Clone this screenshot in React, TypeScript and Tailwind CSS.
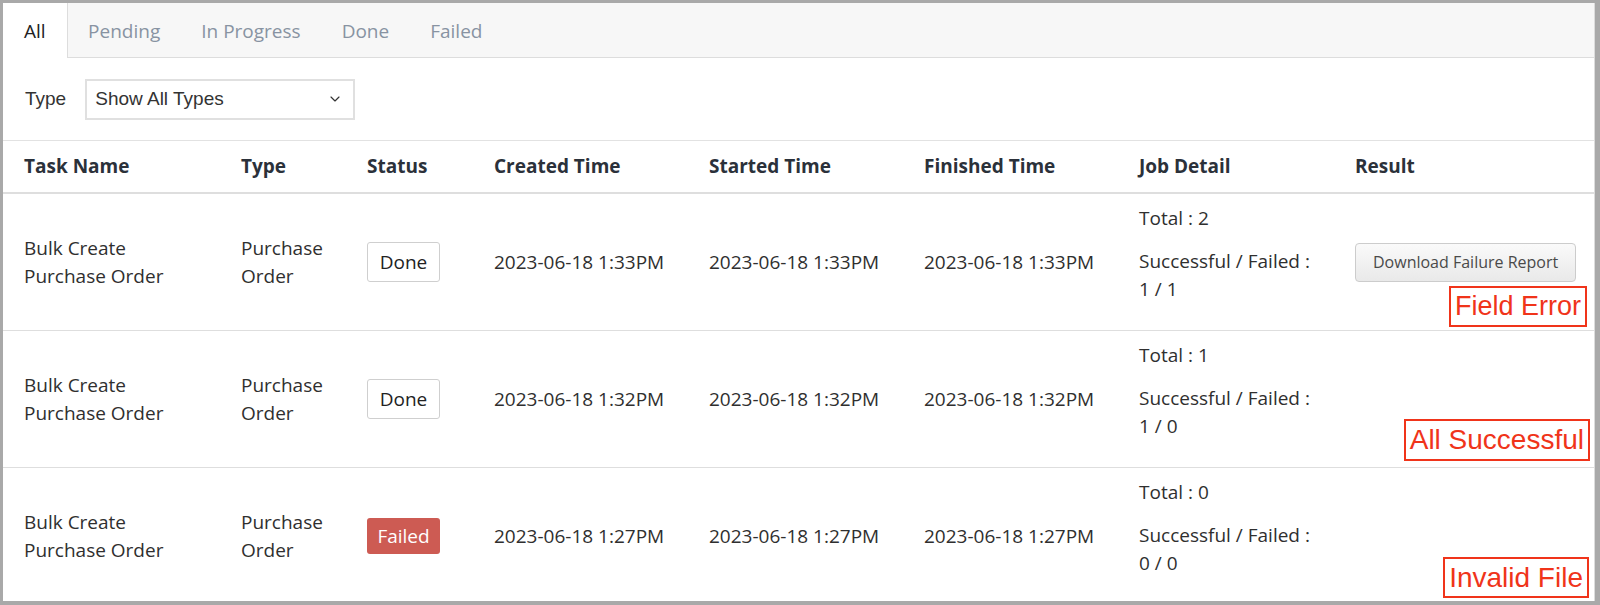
import { ChevronDown } from 'lucide-react';

const tabs = ['All', 'Pending', 'In Progress', 'Done', 'Failed'];

const columns = [
  'Task Name',
  'Type',
  'Status',
  'Created Time',
  'Started Time',
  'Finished Time',
  'Job Detail',
  'Result',
];

type Job = {
  time: string;
  status: 'Done' | 'Failed';
  total: number;
  ok: number;
  failed: number;
  report: boolean;
  note: string;
  noteClass: string;
};

const jobs: Job[] = [
  {
    time: '2023-06-18 1:33PM',
    status: 'Done',
    total: 2,
    ok: 1,
    failed: 1,
    report: true,
    note: 'Field Error',
    noteClass: 'right-[7px] bottom-[3px] leading-[37px] text-[27px]',
  },
  {
    time: '2023-06-18 1:32PM',
    status: 'Done',
    total: 1,
    ok: 1,
    failed: 0,
    report: false,
    note: 'All Successful',
    noteClass: 'right-[4px] bottom-[6px] leading-[38px] text-[28px]',
  },
  {
    time: '2023-06-18 1:27PM',
    status: 'Failed',
    total: 0,
    ok: 0,
    failed: 0,
    report: false,
    note: 'Invalid File',
    noteClass: 'right-[5px] bottom-[6px] leading-[37px] text-[28px]',
  },
];

const grid =
  'grid grid-cols-[217px_126px_127px_215px_215px_215px_216px_1fr]';

function StatusBadge({ status }: { status: Job['status'] }) {
  if (status === 'Failed') {
    return (
      <span className="inline-flex h-[36px] w-[73px] items-center justify-center rounded-[3px] bg-[#cd5b53] text-white">
        Failed
      </span>
    );
  }
  return (
    <span className="inline-flex h-[40px] w-[73px] items-center justify-center rounded-[3px] border border-[#cfcfcf] bg-white text-[#222]">
      Done
    </span>
  );
}

export default function App() {
  return (
    <div className="h-[605px] w-[1600px] overflow-hidden bg-[#a9a9a9] pb-[4px] pl-[3px] pr-[5px] pt-[3px]">
      <div className="flex h-full flex-col overflow-hidden border-r border-[#dcdcdc] bg-white font-['Open_Sans',sans-serif] text-[19px] leading-[28.5px] text-[#2f2f2f]">
        <div className="flex h-[55px] shrink-0 border-b border-[#dddddd] bg-[#f7f7f7]">
          {tabs.map((tab, i) => (
            <div
              key={tab}
              className={
                i === 0
                  ? '-mb-px flex h-[55px] items-center border-r border-[#dddddd] bg-white px-[21px] pt-[2px] text-[#222]'
                  : 'flex items-center px-[20.5px] pt-[2px] text-[#8893a2]'
              }
            >
              {tab}
            </div>
          ))}
        </div>

        <div className="flex h-[83px] shrink-0 items-center gap-[19px] border-b border-[#e2e2e2] pl-[22px] font-['Liberation_Sans',Arial,sans-serif] text-[#333]">
          <span>Type</span>
          <div className="flex h-[41px] w-[270px] items-center justify-between border-2 border-[#e0e0e0] pl-[8px] pr-[10px]">
            <span>Show All Types</span>
            <ChevronDown size={16} strokeWidth={1.75} className="text-[#333]" />
          </div>
        </div>

        <div className={`${grid} h-[53px] shrink-0 items-center border-b-2 border-[#dedede] font-bold text-[#2b313a]`}>
          {columns.map((c) => (
            <div key={c} className="pl-[21px]">
              {c}
            </div>
          ))}
        </div>

        {jobs.map((job, i) => (
          <div
            key={i}
            className={`${grid} relative h-[137px] shrink-0 items-center border-b border-[#dedede]`}
          >
            <div className="pl-[21px] pr-[40px]">Bulk Create Purchase Order</div>
            <div className="pl-[21px] pr-[8px]">Purchase Order</div>
            <div className="pl-[21px]">
              <StatusBadge status={job.status} />
            </div>
            <div className="pl-[21px]">{job.time}</div>
            <div className="pl-[21px]">{job.time}</div>
            <div className="pl-[21px]">{job.time}</div>
            <div className="self-start pl-[21px] pt-[10px]">
              <div className="mb-[14px]">Total : {job.total}</div>
              <div>Successful / Failed :</div>
              <div>
                {job.ok} / {job.failed}
              </div>
            </div>
            <div className="pl-[21px]">
              {job.report && (
                <button className="h-[39px] rounded-[4px] border border-[#cccccc] bg-gradient-to-b from-[#fafafa] to-[#e9e9e9] px-[17px] text-[16px] text-[#4a4a4a]">
                  Download Failure Report
                </button>
              )}
            </div>
            <div
              className={`absolute ${job.noteClass} border-2 border-[#f0341a] px-[4px] font-['Liberation_Sans',Arial,sans-serif] text-[#f0341a]`}
            >
              {job.note}
            </div>
          </div>
        ))}
      </div>
    </div>
  );
}
